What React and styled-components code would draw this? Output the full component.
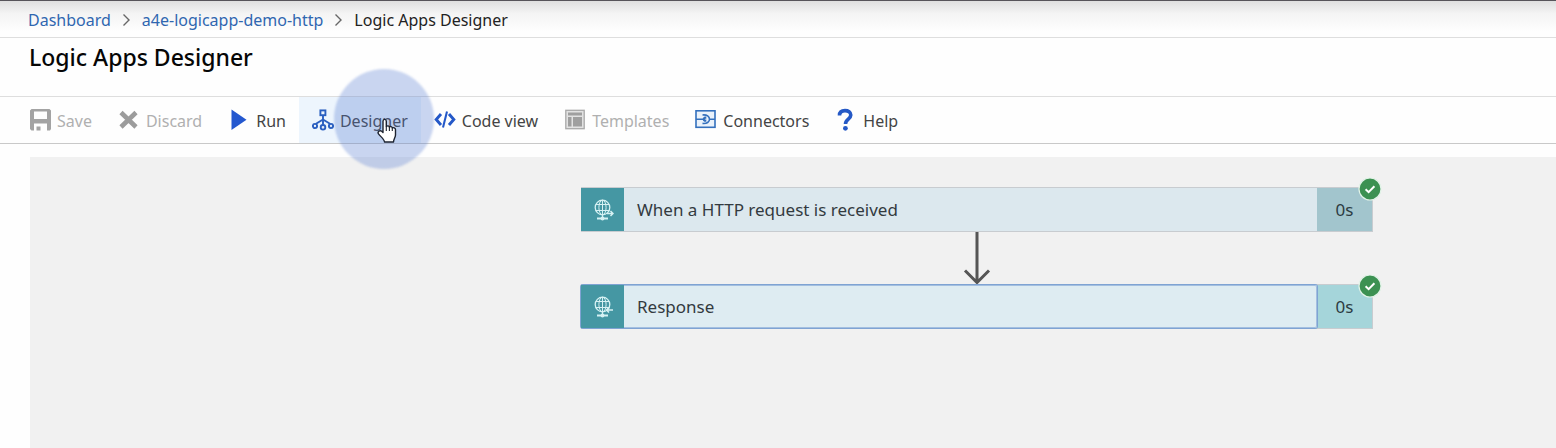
import React from 'react';
import styled, { createGlobalStyle } from 'styled-components';

const GlobalStyle = createGlobalStyle`
  *, *::before, *::after { box-sizing: border-box; }
  body {
    margin: 0;
    background: #fefefe;
    color: #222;
    font-family: "Segoe UI", "Noto Sans", "Open Sans", sans-serif;
    font-size: 16px;
  }
`;

const Page = styled.div`
  display: flex;
  flex-direction: column;
  min-height: 100vh;
`;

const TopBar = styled.nav`
  border-top: 1px solid #57545a;
  border-bottom: 1px solid #dedede;
  background: linear-gradient(#dfdfdf, #f4f4f4 35%, #fefefe 85%);
  height: 38px;
  padding: 0 28px;
`;

const Crumbs = styled.ol`
  display: flex;
  align-items: center;
  gap: 11px;
  height: 37px;
  margin: 0;
  padding: 0;
  list-style: none;
  font-size: 16px;
  line-height: 24px;
`;

const Crumb = styled.li`
  display: flex;
  align-items: center;
  gap: 11px;
  white-space: nowrap;
`;

const CrumbLink = styled.a`
  color: #2f66b0;
  text-decoration: none;
`;

const Header = styled.header`
  height: 58px;
  padding: 4px 29px;
`;

const Title = styled.h1`
  margin: 0;
  font-size: 23px;
  font-weight: 500;
  line-height: 30px;
  color: #060606;
`;

const Toolbar = styled.div`
  display: flex;
  height: 48px;
  padding: 0 17px;
  border-top: 1px solid #dedede;
  border-bottom: 1px solid #c9c9c9;
`;

const Tool = styled.button`
  position: relative;
  display: flex;
  align-items: center;
  gap: 6px;
  padding: 0 13px;
  border: 0;
  background: ${(p) => (p.$active ? '#edf5fd' : 'transparent')};
  color: #444;
  font: inherit;
  line-height: 24px;
  white-space: nowrap;

  &:disabled { color: #b0b0b0; }
  svg { flex: none; }
`;

const Label = styled.span`
  padding-top: 2px;
`;

const ClickHalo = styled.span`
  position: absolute;
  z-index: 2;
  top: -28px;
  left: 35px;
  width: 100px;
  height: 100px;
  border-radius: 50%;
  background: rgba(79, 119, 207, 0.3);
  filter: blur(1px);
  pointer-events: none;
`;

const HandCursor = styled.svg`
  position: absolute;
  z-index: 3;
  top: 21px;
  left: 77px;
  pointer-events: none;
`;

const Canvas = styled.main`
  flex: 1;
  display: grid;
  grid-template-columns: 551fr 792fr 183fr;
  align-items: start;
  margin: 13px 0 0 30px;
  padding-top: 30px;
  background: #f1f1f1;
`;

const Flow = styled.div`
  grid-column: 2;
  display: flex;
  flex-direction: column;
`;

const Card = styled.article`
  position: relative;
  display: flex;
  height: 45px;
  border: 1px solid #c8ccd0;
  border-left: 0;
  background: ${(p) => (p.$selected ? '#deecf2' : '#dce8ee')};
`;

const CardMain = styled.div`
  position: relative;
  z-index: ${(p) => (p.$selected ? 1 : 0)};
  flex: 1;
  display: flex;
  border-radius: ${(p) => (p.$selected ? '2px' : '0')};
  box-shadow: ${(p) => (p.$selected ? '0 0 0 1px #7fa3d3, inset 0 0 0 1px #a3bfe0' : 'none')};
`;

const CardIcon = styled.div`
  display: flex;
  align-items: center;
  justify-content: center;
  width: 43px;
  background: #4597a3;
`;

const CardTitle = styled.h2`
  margin: 0;
  padding-left: 13px;
  align-self: center;
  font-size: 17px;
  font-weight: 400;
  line-height: 24px;
  color: #333a3f;
`;

const Duration = styled.div`
  display: flex;
  align-items: center;
  justify-content: center;
  width: 55px;
  background: ${(p) => (p.$selected ? '#a5d5da' : '#a2c5cd')};
  font-size: 17px;
  color: #2c3b42;
`;

const Badge = styled.svg`
  position: absolute;
  top: -11px;
  right: -10px;
`;

const Connector = styled.svg`
  align-self: center;
  display: block;
`;

const Chevron = () => (
  <svg width="9" height="14" viewBox="0 0 9 14" fill="none" stroke="#666" strokeWidth="1.4" aria-hidden="true">
    <path d="M1.5 1.5 7 7l-5.5 5.5" />
  </svg>
);

const SaveIcon = () => (
  <svg width="21" height="22" viewBox="0 0 21 22" aria-hidden="true">
    <path fill="#a3a3a3" fillRule="evenodd" d="M1.5 0h18L21 1.500V20l-1 1.500h-3V14.500H4V21.500H1.500L0 20V1.500zM4 2.500v7.500h13V2.500z" />
    <path fill="#a3a3a3" d="M6.500 17.500h4v4h-4z" />
  </svg>
);

const DiscardIcon = () => (
  <svg width="22" height="22" viewBox="0 0 22 22" fill="none" stroke="#9c9c9c" strokeWidth="4.600" aria-hidden="true">
    <path d="M3 3.500 18 18M18 3.500 3 18" />
  </svg>
);

const RunIcon = () => (
  <svg width="22" height="22" viewBox="0 0 22 22" aria-hidden="true">
    <path fill="#2458cf" d="M3.500.5 18.500 10.800 3.500 21z" />
  </svg>
);

const DesignerIcon = () => (
  <svg width="22" height="22" viewBox="0 0 22 22" fill="none" stroke="#2a5fc0" strokeWidth="1.900" aria-hidden="true">
    <rect x="8.400" y="1.400" width="5" height="4.800" />
    <path d="M11 6.200v9.500M11 10.500 4 14.800M11 10.500l7 4.300" />
    <circle cx="3" cy="17" r="2.100" fill="#f4f8fd" />
    <circle cx="11" cy="18.300" r="2.300" fill="#e4ecfa" />
    <circle cx="19" cy="17" r="2.100" fill="#e4ecfa" />
  </svg>
);

const CodeIcon = () => (
  <svg width="22" height="22" viewBox="0 0 22 22" fill="none" stroke="#2458c8" aria-hidden="true">
    <path strokeWidth="2.900" d="M7 5 2.200 10.500l4.800 5.500M15 5l4.800 5.500-4.800 5.500" />
    <path strokeWidth="2" d="M13 2.500 9 18.500" />
  </svg>
);

const TemplatesIcon = () => (
  <svg width="22" height="22" viewBox="0 0 22 22" aria-hidden="true">
    <g transform="translate(1 0)">
      <rect x=".8" y="1.300" width="18.400" height="18.400" fill="#e2e2e2" stroke="#a9a9a9" strokeWidth="1.300" />
      <path fill="#9f9f9f" d="M3 3.500h14v3H3zM3 8h3.500v9.500H3zM8 8h9v9.500H8z" />
    </g>
  </svg>
);

const ConnectorsIcon = () => (
  <svg width="22" height="22" viewBox="0 0 22 22" fill="none" stroke="#3470bd" strokeWidth="1.600" aria-hidden="true">
    <rect x="1" y="1.800" width="19" height="16.500" fill="#eaf2fb" />
    <path d="M1 10.200h8M14.500 10.200H20M7.500 6c4.500-.5 7 1.600 7 4.200s-2.500 4.700-7 4.200" />
    <path strokeWidth="2.200" d="M11.300 8.700H9.800a1.600 1.600 0 0 0 0 3h1.500" />
  </svg>
);

const HelpIcon = () => (
  <svg width="22" height="24" viewBox="0 0 22 24" fill="none" aria-hidden="true">
    <path stroke="#2559c6" strokeWidth="3.600" d="M4.500 7.500C4.500 4 6.800 2.600 10 2.600s5.800 1.500 5.800 4.500c0 4.200-5.300 4-5.300 8.900" />
    <circle cx="10.400" cy="20.300" r="2.400" fill="#2559c6" />
  </svg>
);

const GlobeIcon = ({ incoming }) => (
  <svg width="22" height="24" viewBox="0 0 22 24" fill="none" stroke="#d6f1f3" strokeWidth="1.300" aria-hidden="true">
    <circle cx="10.500" cy="9.500" r="7.300" />
    <ellipse cx="10.500" cy="9.500" rx="3.600" ry="7.300" strokeWidth="1" />
    <path strokeWidth="1" d="M10.500 2v15M3.800 6.500h13.400M3.800 12.500h13.400" />
    <path d="M10.500 17v3" />
    <path strokeWidth="2" d="M5 20.500h11" />
    <circle cx="10.500" cy="20.500" r="1.300" fill="#d6f1f3" />
    {incoming
      ? <path strokeWidth="1.500" d="M21 15h-6.500m2.500-2.500L14.500 15l2.500 2.500" />
      : <path strokeWidth="1.500" d="M15 15.500h6M18.500 13l2.500 2.500L18.500 18" />}
  </svg>
);

const SuccessBadge = () => (
  <Badge width="24" height="24" viewBox="0 0 24 24" role="img" aria-label="Succeeded">
    <circle cx="12" cy="12" r="11" fill="#3c9152" stroke="#e2f3e8" strokeWidth="1.200" />
    <path d="M7.600 12.200l3 2.900 5.800-5.900" fill="none" stroke="#fff" strokeWidth="2" />
  </Badge>
);

const Hand = () => (
  <HandCursor width="22" height="26" viewBox="0 0 22 26" aria-hidden="true">
    <path
      d="M7 14.500V3.200C7 .8 10.300.8 10.300 3.200V8.500c.8-1 2.800-.8 3.100.5.9-.8 2.600-.5 2.900.9 1-.6 3.200 0 3.200 1.700v5.500c0 2.500-2 4-2 6.900H8.500c0-2.500-3.500-5-6-8.100-1.500-2.200 1.400-4 3.200-2.700z"
      fill="#fff"
      stroke="#1d2330"
      strokeWidth="1.400"
      strokeLinejoin="round"
    />
    <path d="M10.300 8.500V13M13.400 9V13M16.300 10V13" stroke="#1d2330" strokeWidth="1.100" />
  </HandCursor>
);

const tools = [
  { label: 'Save', Icon: SaveIcon, disabled: true },
  { label: 'Discard', Icon: DiscardIcon, disabled: true },
  { label: 'Run', Icon: RunIcon },
  { label: 'Designer', Icon: DesignerIcon, active: true },
  { label: 'Code view', Icon: CodeIcon },
  { label: 'Templates', Icon: TemplatesIcon, disabled: true },
  { label: 'Connectors', Icon: ConnectorsIcon },
  { label: 'Help', Icon: HelpIcon },
];

const Step = ({ title, duration, selected, incoming }) => (
  <Card $selected={selected}>
    <CardMain $selected={selected}>
      <CardIcon><GlobeIcon incoming={incoming} /></CardIcon>
      <CardTitle>{title}</CardTitle>
    </CardMain>
    <Duration $selected={selected}>{duration}</Duration>
    <SuccessBadge />
  </Card>
);

export default function App() {
  return (
    <Page>
      <GlobalStyle />
      <TopBar aria-label="Breadcrumb">
        <Crumbs>
          <Crumb><CrumbLink href="#dashboard">Dashboard</CrumbLink><Chevron /></Crumb>
          <Crumb><CrumbLink href="#app">a4e-logicapp-demo-http</CrumbLink><Chevron /></Crumb>
          <Crumb aria-current="page">Logic Apps Designer</Crumb>
        </Crumbs>
      </TopBar>
      <Header><Title>Logic Apps Designer</Title></Header>
      <Toolbar role="toolbar" aria-label="Designer commands">
        {tools.map(({ label, Icon, disabled, active }) => (
          <Tool key={label} type="button" disabled={disabled} $active={active}>
            <Icon />
            <Label>{label}</Label>
            {active && <><ClickHalo /><Hand /></>}
          </Tool>
        ))}
      </Toolbar>
      <Canvas>
        <Flow>
          <Step title="When a HTTP request is received" duration="0s" />
          <Connector width="28" height="52" viewBox="0 0 28 52" fill="none" stroke="#555" strokeWidth="3" aria-hidden="true">
            <path d="M14 0v50M2 38.500l12 12 12-12" />
          </Connector>
          <Step title="Response" duration="0s" selected incoming />
        </Flow>
      </Canvas>
    </Page>
  );
}
